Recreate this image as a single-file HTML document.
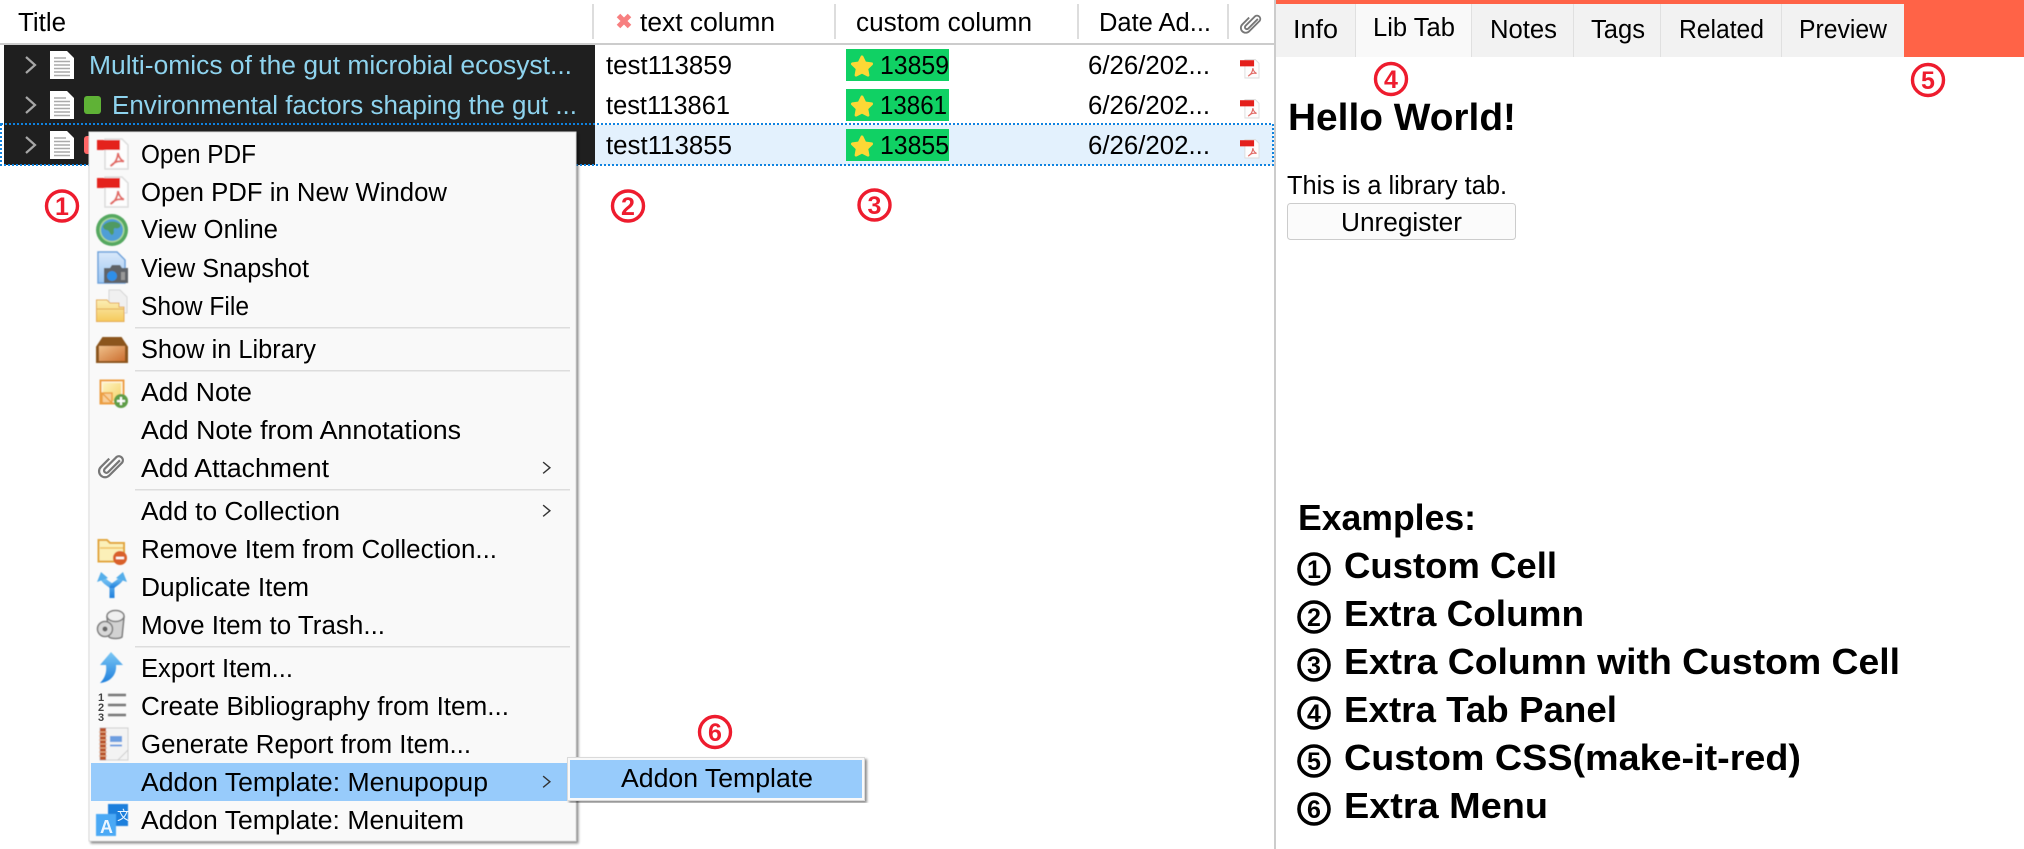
<!DOCTYPE html>
<html lang="en"><head><meta charset="utf-8"><title>Addon Template Examples</title>
<style>
html,body{margin:0;padding:0;background:#fff;width:2024px;height:849px;overflow:hidden}
svg{display:block}
text{font-family:"Liberation Sans","Noto Sans CJK SC",sans-serif;font-size:25.5px;fill:#000}
.b{font-weight:bold}
.t{fill:#8ed3ee}
.hd{font-size:36px;font-weight:bold}
.n{font-weight:bold;font-size:25px;text-anchor:middle}
.r{fill:#ee1c2e}
.ri{fill:none;stroke:#ee1c2e;stroke-width:3.4}
.ki{fill:none;stroke:#000;stroke-width:3.6}
</style></head><body>
<svg width="2024" height="849" viewBox="0 0 2024 849" xmlns="http://www.w3.org/2000/svg">
<defs>
<filter id="sh" x="-5%" y="-5%" width="110%" height="110%"><feDropShadow dx="2" dy="2" stdDeviation="1.2" flood-color="#000" flood-opacity=".45"/></filter>
<filter id="soft" x="-10%" y="-10%" width="120%" height="120%"><feGaussianBlur stdDeviation=".45"/></filter>
<linearGradient id="gb" x1="0" y1="0" x2="0" y2="1"><stop offset="0" stop-color="#fbeeb4"/><stop offset="1" stop-color="#f5c95c"/></linearGradient>
<linearGradient id="gbox" x1="0" y1="0" x2="1" y2="1"><stop offset="0" stop-color="#efc08a"/><stop offset="1" stop-color="#cc6f30"/></linearGradient>
<linearGradient id="gblue" x1="0" y1="0" x2="0" y2="1"><stop offset="0" stop-color="#7cc8f5"/><stop offset="1" stop-color="#1f7fdc"/></linearGradient>
<linearGradient id="gnote" x1="0" y1="0" x2="1" y2="1"><stop offset="0" stop-color="#fdf3c0"/><stop offset="1" stop-color="#f5d268"/></linearGradient>
<linearGradient id="gsnap" x1="0" y1="0" x2="0" y2="1"><stop offset="0" stop-color="#d8e8fa"/><stop offset="1" stop-color="#9cc6f2"/></linearGradient>
<symbol id="doc" viewBox="0 0 24 28" overflow="visible"><path d="M0 0H17L24 7V28H0Z" fill="#fff"/><path d="M4 7H16M4 10.500H20M4 14H20M4 17.500H20M4 21H20M4 24.500H20" stroke="#aaa" stroke-width="1.500"/></symbol>
<symbol id="pdf" viewBox="0 0 31 32" overflow="visible"><path d="M8 1H25L31 7V31H8Z" fill="#fdfdfd" stroke="#dcdcdc" stroke-width="1.500"/><rect x="0" y="2" width="23" height="10" fill="#e4201c"/><path d="M21 15C20.500 21 18 25.500 13.500 28C17 24 22 22.500 27 23.500C23.500 22 21.800 19 21 15Z" fill="none" stroke="#e26a65" stroke-width="1.900"/></symbol>
<symbol id="clip" viewBox="0 0 24 24" overflow="visible"><path d="M19.500 6.500L9 17a2.100 2.100 0 0 1-3-3L16.500 3.500a3.600 3.600 0 0 1 5 5L10 20a5.300 5.300 0 0 1-7.500-7.500L10 5" fill="none" stroke="#777" stroke-width="2"/></symbol>
<symbol id="star" viewBox="-12 -12 24 24" overflow="visible"><path d="M0-10L2.900-4L9.500-3.100L4.700 1.500L5.900 8.100L0 5L-5.900 8.100L-4.700 1.500L-9.500-3.100L-2.900-4Z" fill="#fdd835" stroke="#fdd835" stroke-width="3" stroke-linejoin="round"/></symbol>
<symbol id="chev" viewBox="0 0 11 18" overflow="visible"><path d="M1 1L10 9L1 17" fill="none" stroke="#a6a6a6" stroke-width="2.200"/></symbol>
<symbol id="mchev" viewBox="0 0 8 12" overflow="visible"><path d="M1 1L7 6L1 11" fill="none" stroke="#333" stroke-width="1.300"/></symbol>
</defs>

<!-- table header -->
<rect x="0" y="43" width="1274" height="2" fill="#ccc"/>
<g fill="#ddd"><rect x="592" y="4" width="2" height="35"/><rect x="834" y="4" width="2" height="35"/><rect x="1077" y="4" width="2" height="35"/><rect x="1227" y="4" width="2" height="35"/></g>
<text x="18" y="31" textLength="48" lengthAdjust="spacingAndGlyphs">Title</text>
<path d="M618.500 15.500L629.500 26.500M629.500 15.500L618.500 26.500" stroke="#f77f80" stroke-width="5"/>
<text x="640" y="31" textLength="135" lengthAdjust="spacingAndGlyphs">text column</text>
<text x="856" y="31" textLength="176" lengthAdjust="spacingAndGlyphs">custom column</text>
<text x="1099" y="31" textLength="112" lengthAdjust="spacingAndGlyphs">Date Ad...</text>
<use href="#clip" x="1240" y="13" width="22" height="22"/>

<!-- rows -->
<rect x="595" y="125" width="678" height="40" fill="#e3f1fd"/>
<rect x="4" y="45" width="591" height="120" fill="#1f1f1f"/>
<rect x="1" y="124" width="1272" height="41" fill="none" stroke="#0f83e0" stroke-width="2" stroke-dasharray="2 2"/>

<use href="#chev" x="25" y="56" width="11" height="18"/><use href="#doc" x="50" y="51" width="24" height="28"/>
<use href="#chev" x="25" y="96" width="11" height="18"/><use href="#doc" x="50" y="91" width="24" height="28"/>
<use href="#chev" x="25" y="136" width="11" height="18"/><use href="#doc" x="50" y="131" width="24" height="28"/>
<rect x="84" y="96" width="17" height="18" rx="3" fill="#5fb236"/>
<rect x="84" y="136" width="17" height="18" rx="3" fill="#ff6666"/>
<text class="t" x="89" y="74" textLength="483" lengthAdjust="spacingAndGlyphs">Multi-omics of the gut microbial ecosyst...</text>
<text class="t" x="112" y="114" textLength="465" lengthAdjust="spacingAndGlyphs">Environmental factors shaping the gut ...</text>

<text x="606" y="74" textLength="126" lengthAdjust="spacingAndGlyphs">test113859</text>
<text x="606" y="114" textLength="124" lengthAdjust="spacingAndGlyphs">test113861</text>
<text x="606" y="154" textLength="126" lengthAdjust="spacingAndGlyphs">test113855</text>

<g fill="#10d164"><rect x="846" y="49" width="103" height="32"/><rect x="846" y="89" width="103" height="32"/><rect x="846" y="129" width="103" height="32"/></g>
<use href="#star" x="850" y="55" width="24" height="24"/><use href="#star" x="850" y="95" width="24" height="24"/><use href="#star" x="850" y="135" width="24" height="24"/>
<text x="880" y="74" textLength="69" lengthAdjust="spacingAndGlyphs">13859</text>
<text x="880" y="114" textLength="67" lengthAdjust="spacingAndGlyphs">13861</text>
<text x="880" y="154" textLength="69" lengthAdjust="spacingAndGlyphs">13855</text>

<text x="1088" y="74" textLength="122" lengthAdjust="spacingAndGlyphs">6/26/202...</text>
<text x="1088" y="114" textLength="122" lengthAdjust="spacingAndGlyphs">6/26/202...</text>
<text x="1088" y="154" textLength="122" lengthAdjust="spacingAndGlyphs">6/26/202...</text>
<use href="#pdf" x="1240" y="59" width="19" height="19.600"/><use href="#pdf" x="1240" y="99" width="19" height="19.600"/><use href="#pdf" x="1240" y="139" width="19" height="19.600"/>

<!-- right pane -->
<rect x="1274" y="0" width="2" height="849" fill="#ccc"/>
<rect x="1276" y="0" width="748" height="4" fill="#ff6347"/>
<rect x="1904" y="0" width="120" height="57" fill="#ff6347"/>
<rect x="1276" y="4" width="628" height="53" fill="#f2f2f2"/>
<rect x="1356" y="4" width="115" height="53" fill="#f9f9f9"/>
<g fill="#e0e0e0"><rect x="1355" y="4" width="1" height="53"/><rect x="1471" y="4" width="1" height="53"/><rect x="1573" y="4" width="1" height="53"/><rect x="1660" y="4" width="1" height="53"/><rect x="1781" y="4" width="1" height="53"/></g>
<text x="1293" y="38" textLength="45" lengthAdjust="spacingAndGlyphs">Info</text>
<text x="1373" y="36" textLength="82" lengthAdjust="spacingAndGlyphs">Lib Tab</text>
<text x="1490" y="38" textLength="67" lengthAdjust="spacingAndGlyphs">Notes</text>
<text x="1591" y="38" textLength="54" lengthAdjust="spacingAndGlyphs">Tags</text>
<text x="1679" y="38" textLength="85" lengthAdjust="spacingAndGlyphs">Related</text>
<text x="1799" y="38" textLength="88" lengthAdjust="spacingAndGlyphs">Preview</text>

<text class="b" style="font-size:38px" x="1288" y="130" textLength="228" lengthAdjust="spacingAndGlyphs">Hello World!</text>
<text x="1287" y="194" textLength="220" lengthAdjust="spacingAndGlyphs">This is a library tab.</text>
<rect x="1287.500" y="203.500" width="228" height="36" rx="3" fill="#fbfbfb" stroke="#ccc"/>
<text x="1341" y="231" textLength="121" lengthAdjust="spacingAndGlyphs">Unregister</text>

<text class="hd" x="1298" y="530" textLength="178" lengthAdjust="spacingAndGlyphs">Examples:</text>
<g>
<ellipse class="ki" cx="1314" cy="569" rx="15" ry="15"/><text class="n" x="1314" y="578">1</text>
<ellipse class="ki" cx="1314" cy="617" rx="15" ry="15"/><text class="n" x="1314" y="626">2</text>
<ellipse class="ki" cx="1314" cy="665" rx="15" ry="15"/><text class="n" x="1314" y="674">3</text>
<ellipse class="ki" cx="1314" cy="713" rx="15" ry="15"/><text class="n" x="1314" y="722">4</text>
<ellipse class="ki" cx="1314" cy="761" rx="15" ry="15"/><text class="n" x="1314" y="770">5</text>
<ellipse class="ki" cx="1314" cy="809" rx="15" ry="15"/><text class="n" x="1314" y="818">6</text>
</g>
<text class="hd" x="1344" y="578" textLength="213" lengthAdjust="spacingAndGlyphs">Custom Cell</text>
<text class="hd" x="1344" y="626" textLength="240" lengthAdjust="spacingAndGlyphs">Extra Column</text>
<text class="hd" x="1344" y="674" textLength="556" lengthAdjust="spacingAndGlyphs">Extra Column with Custom Cell</text>
<text class="hd" x="1344" y="722" textLength="273" lengthAdjust="spacingAndGlyphs">Extra Tab Panel</text>
<text class="hd" x="1344" y="770" textLength="457" lengthAdjust="spacingAndGlyphs">Custom CSS(make-it-red)</text>
<text class="hd" x="1344" y="818" textLength="204" lengthAdjust="spacingAndGlyphs">Extra Menu</text>

<!-- context menu -->
<rect x="89" y="132" width="487" height="709" fill="#f9f9f9" stroke="#dadada" filter="url(#sh)"/>
<g fill="#ddd"><rect x="135" y="327" width="435" height="1.500"/><rect x="135" y="370" width="435" height="1.500"/><rect x="135" y="489" width="435" height="1.500"/><rect x="135" y="646" width="435" height="1.500"/></g>
<rect x="91" y="763" width="476" height="38" fill="#97cbfb"/>

<text x="141" y="163" textLength="115" lengthAdjust="spacingAndGlyphs">Open PDF</text>
<text x="141" y="201" textLength="306" lengthAdjust="spacingAndGlyphs">Open PDF in New Window</text>
<text x="141" y="238" textLength="137" lengthAdjust="spacingAndGlyphs">View Online</text>
<text x="141" y="277" textLength="168" lengthAdjust="spacingAndGlyphs">View Snapshot</text>
<text x="141" y="315" textLength="108" lengthAdjust="spacingAndGlyphs">Show File</text>
<text x="141" y="358" textLength="175" lengthAdjust="spacingAndGlyphs">Show in Library</text>
<text x="141" y="401" textLength="111" lengthAdjust="spacingAndGlyphs">Add Note</text>
<text x="141" y="439" textLength="320" lengthAdjust="spacingAndGlyphs">Add Note from Annotations</text>
<text x="141" y="477" textLength="188" lengthAdjust="spacingAndGlyphs">Add Attachment</text>
<text x="141" y="520" textLength="199" lengthAdjust="spacingAndGlyphs">Add to Collection</text>
<text x="141" y="558" textLength="356" lengthAdjust="spacingAndGlyphs">Remove Item from Collection...</text>
<text x="141" y="596" textLength="168" lengthAdjust="spacingAndGlyphs">Duplicate Item</text>
<text x="141" y="634" textLength="244" lengthAdjust="spacingAndGlyphs">Move Item to Trash...</text>
<text x="141" y="677" textLength="152" lengthAdjust="spacingAndGlyphs">Export Item...</text>
<text x="141" y="715" textLength="368" lengthAdjust="spacingAndGlyphs">Create Bibliography from Item...</text>
<text x="141" y="753" textLength="330" lengthAdjust="spacingAndGlyphs">Generate Report from Item...</text>
<text x="141" y="791" textLength="347" lengthAdjust="spacingAndGlyphs">Addon Template: Menupopup</text>
<text x="141" y="829" textLength="323" lengthAdjust="spacingAndGlyphs">Addon Template: Menuitem</text>

<use href="#mchev" x="542" y="461" width="9" height="13.500"/>
<use href="#mchev" x="542" y="504" width="9" height="13.500"/>
<use href="#mchev" x="542" y="775" width="9" height="13.500"/>

<!-- menu icons -->
<g filter="url(#soft)">
<use href="#pdf" x="97" y="138" width="31" height="32"/>
<use href="#pdf" x="97" y="176" width="31" height="32"/>
<circle cx="112" cy="230" r="16" fill="#55a860"/><circle cx="112" cy="230" r="12.500" fill="#a9d79c"/><circle cx="112" cy="230" r="11" fill="#4f9ed6"/><path d="M103 226C107 221 115 220 120 224C122 228 117 229 115 228C112 229 116 233 112 235C109 234 110 230 106 230C104 229 103 228 103 226Z" fill="#4f9a62"/>
<path d="M98 252H117L125 260V283H98Z" fill="url(#gsnap)" stroke="#6fa3dc" stroke-width="1.500"/><path d="M104 268H110L112 265H120L122 268H128V283H104Z" fill="#5f6468"/><circle cx="112" cy="276" r="5" fill="#2f8fe8"/><rect x="121" y="272" width="4" height="8" fill="#999"/>
<path d="M109 290H120L127 297V313H109Z" fill="#f0f0f0" stroke="#d6d6d6"/><path d="M96.500 300H107L110 303H119V307H124V321.500H96.500Z" fill="url(#gb)" stroke="#e3aa55"/><path d="M97 309H124" stroke="#e3aa55"/>
<path d="M97 347L103 338H121L127 347V362H97Z" fill="#8b541f" stroke="#8b541f" stroke-width="2"/><rect x="99" y="346" width="26" height="15" fill="url(#gbox)"/>
<rect x="100.500" y="380.500" width="23" height="23" fill="#fff5d8" stroke="#ec9f42" stroke-width="2"/><rect x="103" y="383" width="18" height="18" fill="url(#gnote)"/><path d="M102 393H112V403H102Z" fill="#f8cf9a" stroke="#ec9f42" stroke-width="1.500"/><path d="M102 393L112 403" stroke="#ec9f42" stroke-width="1.500"/><circle cx="121" cy="401" r="7" fill="#5f9e46"/><path d="M117 401H125M121 397V405" stroke="#fff" stroke-width="2.200"/>
<path d="M98.500 540H107L110 543H124V561.500H98.500Z" fill="#fbf0b8" stroke="#e2a63c" stroke-width="2"/><path d="M100 548H123" stroke="#f0c060" stroke-width="1.500"/><circle cx="120" cy="558" r="7" fill="#d9602a"/><path d="M116 558H124" stroke="#fff" stroke-width="2.400"/>
<g fill="none" stroke="url(#gblue)" stroke-width="5"><path d="M112 598V588C112 584 105 584 102 577"/><path d="M112 588C112 584 119 584 122 577"/></g><path d="M97 582L101 572L108 578ZM127 582L123 572L116 578Z" fill="#55aeea"/>
<path d="M107 617H124L122 637C119 639 112 639 109 637Z" fill="#d2d2d2" stroke="#7d7d7d" stroke-width="1.500"/><ellipse cx="115.500" cy="616" rx="8.500" ry="5.500" fill="#efefef" stroke="#7d7d7d" stroke-width="1.500"/><circle cx="105" cy="629" r="7.500" fill="#d8d8d8" stroke="#7d7d7d" stroke-width="1.500"/><circle cx="105" cy="629" r="2.500" fill="#666"/>
<path d="M111 652L123 665H116C117 674 111 682 100 683C105 678 107 672 106 665H100Z" fill="url(#gblue)"/>
<path d="M108 695H126M108 705H126M108 715H126" stroke="#777" stroke-width="2.600"/>
<rect x="100" y="728" width="28" height="32" fill="#f3f3f3" stroke="#cfcfcf"/><rect x="100" y="728" width="6" height="32" fill="#b8532a"/><path d="M99 732H107M99 736H107M99 740H107M99 744H107M99 748H107M99 752H107M99 756H107" stroke="#e8b088" stroke-width="1"/><rect x="110" y="736" width="12" height="6" fill="#6d9ee0"/><path d="M110 745.500H122" stroke="#6d9ee0" stroke-width="2"/><path d="M128 750L118 760" stroke="#cfcfcf"/>
<rect x="108" y="804" width="20" height="22" fill="#1f7fdc"/><rect x="96" y="814" width="20" height="22" fill="#4ba9f5"/>
</g>
<use href="#clip" x="98" y="453" width="27" height="27"/>
<text x="98" y="701" style="font-size:11px;font-weight:bold;fill:#444">1</text><text x="98" y="711" style="font-size:11px;font-weight:bold;fill:#444">2</text><text x="98" y="721" style="font-size:11px;font-weight:bold;fill:#444">3</text>
<text x="100" y="833" style="font-size:18px;font-weight:bold;fill:#eaf5ff">A</text><text x="117" y="820" style="font-size:13px;fill:#eaf5ff">文</text>

<!-- submenu -->
<rect x="567.500" y="757.500" width="297" height="43" fill="#f9f9f9" stroke="#dadada" filter="url(#sh)"/>
<rect x="570" y="760" width="292" height="38" fill="#97cbfb"/>
<text x="621" y="787" textLength="192" lengthAdjust="spacingAndGlyphs">Addon Template</text>

<!-- red markers -->
<ellipse class="ri" cx="62" cy="206" rx="15.500" ry="15"/><text class="n r" x="62" y="215">1</text>
<ellipse class="ri" cx="628" cy="206" rx="15.500" ry="15"/><text class="n r" x="628" y="215">2</text>
<ellipse class="ri" cx="874.500" cy="205" rx="15.500" ry="15"/><text class="n r" x="874.500" y="214">3</text>
<ellipse class="ri" cx="1391" cy="79" rx="15.500" ry="15.500"/><text class="n r" x="1391" y="88">4</text>
<ellipse class="ri" cx="1928" cy="80" rx="15.500" ry="15.500"/><text class="n r" x="1928" y="89">5</text>
<ellipse class="ri" cx="715" cy="732" rx="15.500" ry="15.500"/><text class="n r" x="715" y="741">6</text>
</svg>
</body></html>
